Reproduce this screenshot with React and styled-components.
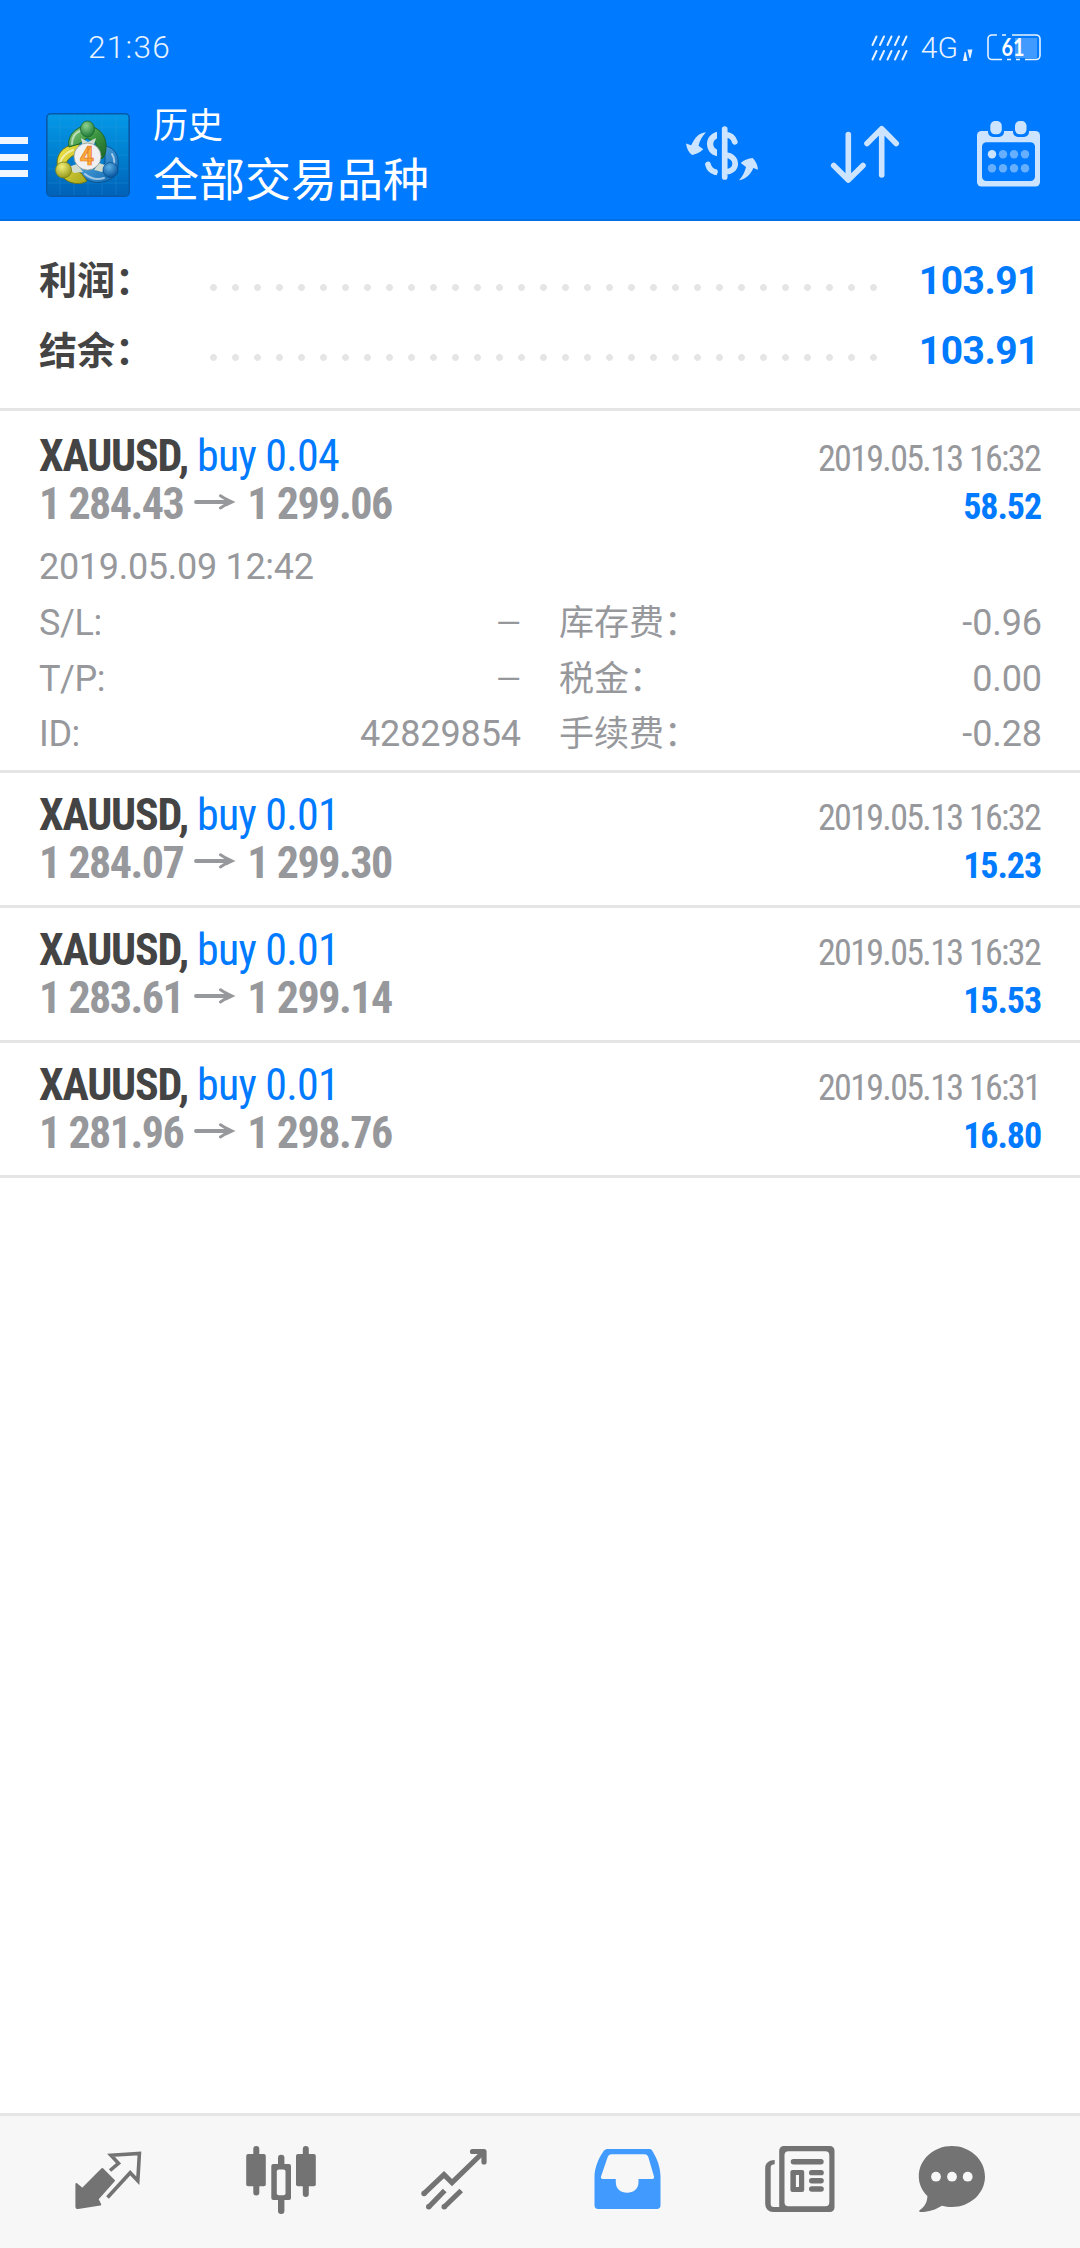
import React from "react";
import styled, { createGlobalStyle } from "styled-components";

const GlobalStyle = createGlobalStyle`
  * {
    box-sizing: border-box;
  }

  body {
    margin: 0;
    background: #fff;
    font-family: Roboto, "Noto Sans CJK SC", sans-serif;
  }

  svg {
    display: block;
    flex: none;
  }
`;

const Screen = styled.div`
  width: 1080px;
  height: 2248px;
  display: flex;
  flex-direction: column;
  background: #fff;
`;

const Top = styled.header`
  height: 221px;
  background: #007aff;
  border-bottom: 2px solid #006ee6;
`;

const StatusBar = styled.div`
  height: 95px;
  padding: 0 39px 0 88px;
  display: flex;
  justify-content: space-between;
  align-items: center;
  color: #e8f3ff;
`;

const Clock = styled.span`
  font-size: 31.5px;
  line-height: 36px;
  font-weight: 350;
  letter-spacing: 1.3px;
`;

const StatusIcons = styled.div`
  display: flex;
  align-items: center;
`;

const Network = styled.span`
  margin-left: 12px;
  font-size: 30px;
  line-height: 36px;
  font-weight: 300;
`;

const AppBar = styled.div`
  height: 124px;
  display: flex;
  align-items: center;
`;

const MenuButton = styled.div`
  width: 28px;
  height: 40px;
  margin-right: 18px;
  display: flex;
  flex-direction: column;
  justify-content: space-between;
`;

const MenuLine = styled.span`
  height: 7px;
  background: #eff6ff;
`;

const LogoBox = styled.div`
  margin-bottom: 5px;
`;

const Titles = styled.div`
  flex: 1;
  margin-left: 23px;
  padding-top: 1px;
  color: #fff;
`;

const Subtitle = styled.div`
  font-size: 35px;
  line-height: 45px;
`;

const Title = styled.h1`
  margin: 0;
  font-size: 46px;
  line-height: 63px;
  font-weight: 400;
`;

const Actions = styled.div`
  display: flex;
  gap: 62px;
  padding-right: 34px;
  margin-bottom: 10px;
`;

const Summary = styled.section`
  height: 190px;
  padding: 24px 41px 0 39px;
  border-bottom: 3px solid #e5e5e5;
`;

const SummaryRow = styled.div`
  height: 70px;
  display: flex;
  align-items: center;
`;

const SummaryLabel = styled.span`
  width: 171px;
  padding-bottom: 6px;
  font-size: 38px;
  font-weight: 700;
  color: #444;
`;

const Dots = styled.div`
  width: 667px;
  height: 7px;
  margin-top: 15px;
  background: radial-gradient(circle at 3.5px 3.5px, #e5e5e5 3px, transparent 3.8px) 0 0 / 22px 7px;
`;

const SummaryValue = styled.span`
  flex: 1;
  padding-top: 1px;
  text-align: right;
  font-size: 39px;
  font-weight: 700;
  letter-spacing: -0.5px;
  color: #007aff;
`;

const Trade = styled.article`
  padding: ${(p) => (p.$open ? "21px 38px 7px 39px" : "18px 38px 18px 39px")};
  border-bottom: 3px solid #e5e5e5;
`;

const TradeLine = styled.div`
  height: 48px;
  display: flex;
  justify-content: space-between;
  align-items: baseline;
  line-height: 48px;
  font-family: "Roboto Condensed", Roboto, sans-serif;
  font-stretch: 75%;
  font-size: 44px;
  white-space: nowrap;
`;

const Symbol = styled.span`
  font-weight: 700;
  letter-spacing: -1.2px;
  color: #444;
`;

const Volume = styled.span`
  letter-spacing: -0.8px;
  color: #007aff;
`;

const Prices = styled.span`
  display: flex;
  gap: 11px;
  font-weight: 700;
  letter-spacing: -1.5px;
  color: #97989c;

  svg {
    margin-top: 14px;
  }
`;

const CloseTime = styled.span`
  margin-right: 2px;
  font-size: 36px;
  letter-spacing: -1.68px;
  color: #97989c;
`;

const Profit = styled.span`
  margin-right: 1px;
  font-size: 36px;
  font-weight: 700;
  letter-spacing: -1.1px;
  color: #007aff;
`;

const Details = styled.div`
  padding-top: 12px;
  font-size: 36px;
  color: #97989c;
`;

const OpenTime = styled.div`
  line-height: 55px;
  padding-bottom: 1px;
  letter-spacing: -0.3px;
`;

const DetailGrid = styled.div`
  display: grid;
  grid-template-columns: 482px 1fr;
  column-gap: 38px;
`;

const Detail = styled.div`
  display: flex;
  justify-content: space-between;
  line-height: 55.5px;
`;

const DetailName = styled.span`
  font-size: ${(p) => (p.$cjk ? "35px" : "36px")};
  letter-spacing: ${(p) => (p.$cjk ? "0" : "-0.4px")};
`;

const DetailValue = styled.span`
  font-size: ${(p) => (p.$empty ? "32px" : "36px")};
  letter-spacing: -0.1px;
`;

const NavBar = styled.nav`
  height: 135px;
  margin-top: auto;
  padding-left: 21px;
  display: flex;
  background: #f7f7f7;
  border-top: 3px solid #e5e5e5;
`;

const NavItem = styled.div`
  width: ${(p) => (p.$last ? 132 : 173)}px;
  padding-top: 28px;
  display: flex;
  justify-content: center;
  color: ${(p) => (p.$active ? "#419bff" : "#737373")};
`;

const summary = [
  { label: "利润：", value: "103.91" },
  { label: "结余：", value: "103.91" },
];

const trades = [
  {
    id: "42829854",
    volume: "0.04",
    open: "1 284.43",
    close: "1 299.06",
    closeTime: "2019.05.13 16:32",
    profit: "58.52",
    openTime: "2019.05.09 12:42",
    details: [
      ["S/L:", "—"],
      ["库存费：", "-0.96"],
      ["T/P:", "—"],
      ["税金：", "0.00"],
      ["ID:", "42829854"],
      ["手续费：", "-0.28"],
    ],
  },
  {
    id: "2",
    volume: "0.01",
    open: "1 284.07",
    close: "1 299.30",
    closeTime: "2019.05.13 16:32",
    profit: "15.23",
  },
  {
    id: "3",
    volume: "0.01",
    open: "1 283.61",
    close: "1 299.14",
    closeTime: "2019.05.13 16:32",
    profit: "15.53",
  },
  {
    id: "4",
    volume: "0.01",
    open: "1 281.96",
    close: "1 298.76",
    closeTime: "2019.05.13 16:31",
    profit: "16.80",
  },
];

const SignalIcon = () => (
  <svg width="38" height="26" viewBox="0 0 38 26" stroke="#e8f3ff" strokeWidth="2" strokeLinecap="round">
    {[0, 7.5, 15, 22.5, 30].map((x) => (
      <path key={x} d={`M${x + 1.5} 10l4-8.500M${x + 1.5} 24.500l4-8.500`} />
    ))}
  </svg>
);

const DataIcon = () => (
  <svg width="12" height="26" viewBox="0 0 12 26" fill="#e8f3ff" style={{ marginLeft: 4 }}>
    <path d="M1 26l1.700-9h1L5.500 26zM5.500 14.500h5l-2 8.500h-1z" />
  </svg>
);

const BatteryIcon = () => (
  <svg width="54" height="40" viewBox="0 -6 54 40" fill="none" style={{ marginLeft: 13 }}>
    <path d="M28 4h22v20H28z" fill="#419bff" />
    <path
      d="M10 1H5a4 4 0 0 0-4 4V21.500a4 4 0 0 0 4 4h10M15 1h4M25 1h24a4 4 0 0 1 4 4V21.500a4 4 0 0 1-4 4H38M20 25.500h4M29 25.500h4"
      stroke="#e8f3ff"
      strokeWidth="1.600"
    />
    <text x="14.500" y="21.500" fill="#fff" fontFamily="Lato" fontWeight="700" fontSize="24" textLength="23" lengthAdjust="spacingAndGlyphs">
      61
    </text>
  </svg>
);

const Logo = () => (
  <svg width="84" height="84" viewBox="0 0 84 84">
    <defs>
      <linearGradient id="tile" x1="0" y1="0" x2="0" y2="1">
        <stop offset="0" stopColor="#0598e8" />
        <stop offset="0.5" stopColor="#0080cf" />
        <stop offset="1" stopColor="#0061b8" />
      </linearGradient>
      <linearGradient id="green" x1="0" y1="0" x2="1" y2="1">
        <stop offset="0" stopColor="#8ccf83" />
        <stop offset="0.5" stopColor="#3b9440" />
        <stop offset="1" stopColor="#1c6528" />
      </linearGradient>
      <linearGradient id="yellow" x1="0" y1="0" x2="1" y2="1">
        <stop offset="0" stopColor="#f6ea4a" />
        <stop offset="1" stopColor="#a5a51d" />
      </linearGradient>
      <linearGradient id="blue" x1="0" y1="0" x2="1" y2="1">
        <stop offset="0" stopColor="#66b8ea" />
        <stop offset="1" stopColor="#0a63ae" />
      </linearGradient>
      <radialGradient id="greenBall" cx="0.4" cy="0.3" r="0.7">
        <stop offset="0" stopColor="#8ed28e" />
        <stop offset="1" stopColor="#1f7a38" />
      </radialGradient>
      <radialGradient id="yellowBall" cx="0.4" cy="0.3" r="0.7">
        <stop offset="0" stopColor="#f4f07a" />
        <stop offset="1" stopColor="#969a1c" />
      </radialGradient>
      <radialGradient id="blueBall" cx="0.4" cy="0.3" r="0.7">
        <stop offset="0" stopColor="#5db0e6" />
        <stop offset="1" stopColor="#07559f" />
      </radialGradient>
    </defs>
    <rect x="0.800" y="0.800" width="82.400" height="82.400" rx="4" fill="url(#tile)" stroke="#0759a8" strokeWidth="1.600" />
    <path d="M14 2v80M28 2v80M42 2v80M56 2v80M70 2v80M2 14h80M2 28h80M2 42h80M2 56h80M2 70h80" stroke="#35a5e4" strokeOpacity="0.22" />
    <path d="M59 33c7 1 12 6 13 13 1 8-1 16-7 20-9 5-20 5-27-2-4-4-6-8-6-12l10-2 9 8 8-8z" fill="url(#blue)" stroke="#0b5594" />
    <path d="M33 31c-9 0-18 4-21 13-3 8 2 18 8 23 6 4 15 5 21 1l-6-8-15-6c-1-7 6-12 14-14z" fill="url(#yellow)" stroke="#6f7614" />
    <path d="M23 34c-2-9 4-17 12-20h12c9 3 14 12 13 21 0 5-2 9-4 11l-6-7V30l-9-5-8 6z" fill="url(#green)" stroke="#1d6428" />
    <path d="M26 31c0-6 3-11 8-13M14 51c1-7 7-12 13-14M66 41c3 5 3 9 1 14M39 61c6 5 13 6 19 4" fill="none" stroke="#fff" strokeOpacity="0.55" strokeWidth="2" strokeLinecap="round" />
    <path d="M35 25l7 4 8-4-3 10H37zM22 54l9-3 6 8-9 1zM62 53l-9-3-5 7 8 2z" fill="#cfdccf" />
    <ellipse cx="41.500" cy="16" rx="7" ry="8" fill="url(#greenBall)" stroke="#1b6a30" strokeWidth="0.800" />
    <circle cx="17.500" cy="57" r="8" fill="url(#yellowBall)" stroke="#7c8216" strokeWidth="0.800" />
    <circle cx="64.500" cy="57" r="7.500" fill="url(#blueBall)" stroke="#084f8e" strokeWidth="0.800" />
    <circle cx="41.500" cy="43.500" r="13.500" fill="#f0f0f2" stroke="#8f9a94" strokeWidth="0.800" />
    <text x="41" y="52" textAnchor="middle" fontFamily="Roboto" fontWeight="700" fontSize="25" fill="#fbb03a" stroke="#e8762b" strokeWidth="0.700">
      4
    </text>
  </svg>
);

const CurrencyIcon = () => (
  <svg width="84" height="74" viewBox="0 0 84 74" fill="none" stroke="#cce4ff" strokeWidth="5.700" strokeLinecap="round">
    <path d="M44.700 14v48M45 19.500c5 .3 8.500 3.200 9.800 7.300M45 40c6 0 10.200 4 10.200 8.700S51 57 45 57" />
    <path d="M28 49.500c1 4 3.500 6.500 7 7.500" />
    <path d="M34 55l3-.5v5.700l-3-.8z" fill="#cce4ff" stroke="none" />
    <path
      d="M37 16.700C31 18 27 23 27 29s4 11 10 12.200v-6.700c-5-2-5-9 0-11zM26 17.300c-4 4.500-6.500 8.500-7.500 13.500l4.800 3.500C19 38 16 39.500 12 40c-3.500-2.500-5.500-7-6-11.500l5.200 1.700C15 22.500 19 18 26 17.300zM59 65.300c3.500-4 6-8.500 7-13.300l-5.300-4c4-3.500 7.500-4.500 12-5 3 3 5 7 5.300 11.700L73.300 53C71 59 66 64 59 65.300z"
      fill="#cce4ff"
      stroke="none"
    />
  </svg>
);

const SortIcon = () => (
  <svg width="84" height="74" viewBox="0 0 84 74" fill="none" stroke="#cce4ff" strokeWidth="5.600" strokeLinecap="round" strokeLinejoin="round">
    <path d="M22.300 19.500V65M7.700 50.500l14.600 14.600L37 50.500M55.700 60V14M41 28.500l14.700-14.700 14.500 14.700" />
  </svg>
);

const CalendarIcon = () => (
  <svg width="74" height="74" viewBox="0 0 74 74" fill="#cce4ff">
    <rect x="5" y="16" width="63" height="55.500" rx="4.500" />
    <rect x="10" y="27.300" width="53" height="38.700" rx="4.500" fill="#007aff" />
    <path d="M16 16h16v1a5 5 0 0 1-5 5h-6a5 5 0 0 1-5-5zM41 16h16v1a5 5 0 0 1-5 5h-6a5 5 0 0 1-5-5z" fill="#007aff" />
    <rect x="18.300" y="6" width="11.500" height="13.300" rx="4.800" />
    <rect x="43" y="6" width="11.500" height="13.300" rx="4.800" />
    {[39.3, 53.2].map((y) =>
      [20, 31, 42, 53].map((x) => (
        <circle key={x + "-" + y} cx={x} cy={y} r="4.200" fill={x === 20 && y < 40 ? "#cce4ff" : "#66afff"} />
      ))
    )}
  </svg>
);

const PriceArrow = () => (
  <svg width="42" height="16" viewBox="0 0 42 16" fill="none" stroke="#97989c" strokeWidth="3.800" strokeLinecap="round">
    <path d="M2 8h34" />
    <path d="M26.500 1.800L36 7.800l-9.500 6.200" strokeWidth="3" />
    <path d="M32 3.500L41.500 8 32 12.500z" fill="#97989c" stroke="none" />
  </svg>
);

const QuotesIcon = () => (
  <svg width="72" height="72" viewBox="0 0 72 72">
    <path
      d="M30.300 25L42 36.600 25.500 55l2.700 5.500L6 64c-1 0-1.600-.8-1.600-1.600V40l6 5z"
      fill="currentColor"
      stroke="currentColor"
      strokeWidth="2"
      strokeLinejoin="round"
    />
    <path d="M38 26.500l8.500-7.200L39 11.200l28.400-1.800-1.600 27.300-7.600-8L35.500 53.500" fill="none" stroke="currentColor" strokeWidth="3.600" />
  </svg>
);

const ChartIcon = () => (
  <svg width="72" height="72" viewBox="0 0 72 72" fill="currentColor">
    <rect x="1.200" y="10" width="19.600" height="32.300" rx="2" />
    <rect x="8.300" y="2" width="6" height="49.500" rx="3" />
    <rect x="51" y="10" width="19.800" height="32.300" rx="2" />
    <rect x="57.800" y="2" width="6" height="51" rx="3" />
    <rect x="33" y="10.700" width="6.400" height="13" rx="3" />
    <rect x="33" y="52" width="6.400" height="18" rx="3" />
    <rect x="26.300" y="20" width="19.700" height="36" rx="2" />
    <rect x="31.800" y="25.500" width="8.700" height="25.800" rx="2" fill="#f7f7f7" />
  </svg>
);

const TrendIcon = () => (
  <svg width="72" height="72" viewBox="0 0 72 72" fill="none" stroke="currentColor" strokeWidth="5.200">
    <path d="M6 49.700l20-19 8 8L66 7.500" />
    <path d="M54.500 7.500H66V18" strokeLinecap="round" strokeLinejoin="round" />
    <path d="M10.700 63l16-16.500M26.200 63l17-16.500" />
    <g fill="currentColor" stroke="none">
      <circle cx="6" cy="49.500" r="2.700" />
      <circle cx="10.700" cy="62.800" r="2.700" />
      <circle cx="26.200" cy="62.800" r="2.700" />
    </g>
  </svg>
);

const TradeIcon = () => (
  <svg width="72" height="72" viewBox="0 0 72 72">
    <path
      fillRule="evenodd"
      d="M16 5h42.500c1 0 2 .5 2.600 1.500C66.500 15 69.500 24 69.500 33v28.500c0 2-1.500 3.500-3.500 3.500H7c-2 0-3.500-1.500-3.500-3.500V33c0-9 4-19 9.500-26.500C14 5.500 15 5 16 5zM20.500 10.300c-1.500 0-3 .8-3.700 2.500L10 32.500c-.4 1.400.4 2.500 1.700 2.500h13.100v3c0 7 5 10.800 11.300 10.800S47.500 45 47.500 38v-3h13.800c1.400 0 2.100-1 1.700-2.400l-5.800-19.800c-.7-1.700-2-2.500-3.700-2.500z"
      fill="currentColor"
    />
  </svg>
);

const NewsIcon = () => (
  <svg width="72" height="72" viewBox="0 0 72 72" fill="currentColor">
    <path
      fillRule="evenodd"
      d="M20 2h46a4.500 4.500 0 0 1 4.500 4.500v57A4.500 4.500 0 0 1 66 68H9a7.800 7.800 0 0 1-7.800-8V24c0-5 4-8 9.500-8v4.300c-2.500 0-4 1-4 3.500V60c0 2 1 3 3 3h5.500V6.500A4.500 4.500 0 0 1 20 2zM24.500 7.300a4 4 0 0 0-4 4v47a4 4 0 0 0 4 4h36.800a4 4 0 0 0 4-4v-47a4 4 0 0 0-4-4z"
    />
    <rect x="26.700" y="15" width="33" height="5.500" rx="2.700" />
    <path fillRule="evenodd" d="M28.400 26h9.800a2 2 0 0 1 2 2v18a2 2 0 0 1-2 2h-9.800a2 2 0 0 1-2-2V28a2 2 0 0 1 2-2zM31.900 31v12H35V31z" />
    <rect x="45" y="26" width="14.800" height="5.300" rx="2.600" />
    <rect x="45" y="34" width="14.800" height="5.500" rx="2.700" />
    <rect x="45" y="42.300" width="14.800" height="5.500" rx="2.700" />
  </svg>
);

const ChatIcon = () => (
  <svg width="72" height="72" viewBox="0 0 72 72" fill="currentColor">
    <path d="M35.900 2C54 2 69 15.500 69 32.500S54 63 35.900 63c-3.500 0-6.700-.5-10-1.300-6 3.800-13.500 6.400-21.400 6.300-1.500-.1-1.800-1-.7-1.900 5-3.600 7.500-8.100 7.600-14.100C6 46.500 2.800 40 2.800 32.500 2.800 15.500 17.500 2 35.900 2z" />
    <g fill="#f7f7f7">
      <circle cx="20" cy="32.700" r="4.900" />
      <circle cx="36" cy="32.700" r="4.900" />
      <circle cx="51.700" cy="32.700" r="4.900" />
    </g>
  </svg>
);

const navIcons = [QuotesIcon, ChartIcon, TrendIcon, TradeIcon, NewsIcon, ChatIcon];

export default function App() {
  return (
    <Screen>
      <GlobalStyle />
      <Top>
        <StatusBar>
          <Clock>21:36</Clock>
          <StatusIcons>
            <SignalIcon />
            <Network>4G</Network>
            <DataIcon />
            <BatteryIcon />
          </StatusIcons>
        </StatusBar>
        <AppBar>
          <MenuButton>
            <MenuLine />
            <MenuLine />
            <MenuLine />
          </MenuButton>
          <LogoBox>
            <Logo />
          </LogoBox>
          <Titles>
            <Subtitle>历史</Subtitle>
            <Title>全部交易品种</Title>
          </Titles>
          <Actions>
            <CurrencyIcon />
            <SortIcon />
            <CalendarIcon />
          </Actions>
        </AppBar>
      </Top>

      <Summary>
        {summary.map((row) => (
          <SummaryRow key={row.label}>
            <SummaryLabel>{row.label}</SummaryLabel>
            <Dots />
            <SummaryValue>{row.value}</SummaryValue>
          </SummaryRow>
        ))}
      </Summary>

      {trades.map((trade) => (
        <Trade key={trade.id} $open={!!trade.details}>
          <TradeLine>
            <span>
              <Symbol>XAUUSD, </Symbol>
              <Volume>buy {trade.volume}</Volume>
            </span>
            <CloseTime>{trade.closeTime}</CloseTime>
          </TradeLine>
          <TradeLine>
            <Prices>
              <span>{trade.open}</span>
              <PriceArrow />
              <span>{trade.close}</span>
            </Prices>
            <Profit>{trade.profit}</Profit>
          </TradeLine>
          {trade.details && (
            <Details>
              <OpenTime>{trade.openTime}</OpenTime>
              <DetailGrid>
                {trade.details.map(([name, value], i) => (
                  <Detail key={name}>
                    <DetailName $cjk={i % 2 === 1}>{name}</DetailName>
                    <DetailValue $empty={value === "—"}>{value}</DetailValue>
                  </Detail>
                ))}
              </DetailGrid>
            </Details>
          )}
        </Trade>
      ))}

      <NavBar>
        {navIcons.map((Icon, i) => (
          <NavItem key={i} $active={i === 3} $last={i === 5}>
            <Icon />
          </NavItem>
        ))}
      </NavBar>
    </Screen>
  );
}
